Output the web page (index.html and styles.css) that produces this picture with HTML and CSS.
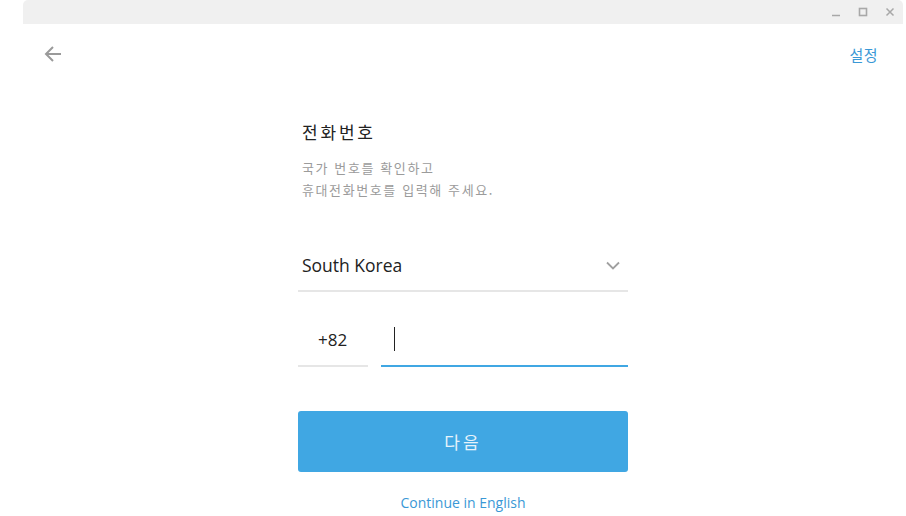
FILE: index.html
```html
<!DOCTYPE html>
<html lang="ko">
<head>
    <meta charset="UTF-8">
    <title>Telegram</title>
    <link rel="stylesheet" href="styles.css">
</head>
<body>

    <div id="window">

        <div id="titlebar">
            <span class="win-btn">
                <svg width="10" height="10" viewBox="0 0 10 10"><path d="M1 8.5h8" stroke="#a8a8a8" stroke-width="1.5"/></svg>
            </span>
            <span class="win-btn">
                <svg width="10" height="10" viewBox="0 0 10 10"><rect x="1.5" y="1.5" width="7" height="7" fill="none" stroke="#a8a8a8" stroke-width="1.6"/></svg>
            </span>
            <span class="win-btn">
                <svg width="10" height="10" viewBox="0 0 10 10"><path d="M1.5 1.5l7 7M8.5 1.5l-7 7" stroke="#a8a8a8" stroke-width="1.5"/></svg>
            </span>
        </div>

        <div id="topbar">
            <span id="back">
                <svg width="20" height="20" viewBox="0 0 20 20"><path d="M18 10H3M10 3L3 10l7 7" fill="none" stroke="#9a9a9a" stroke-width="2"/></svg>
            </span>
            <span id="settings">설정</span>
        </div>

        <div id="intro">
            <div class="title">전화번호</div>
            <div class="desc">국가 번호를 확인하고<br>휴대전화번호를 입력해 주세요.</div>

            <div id="country">
                <span>South Korea</span>
                <svg width="14" height="9" viewBox="0 0 14 9"><path d="M1 1.5l6 6 6-6" fill="none" stroke="#a0a0a0" stroke-width="1.8"/></svg>
            </div>

            <div id="phone-row">
                <div id="code">+82</div>
                <div id="number"><span class="caret"></span></div>
            </div>

            <button id="next">다음</button>

            <div id="english">Continue in English</div>
        </div>

    </div>

</body>
</html>
```

FILE: styles.css
```css
* {
    margin: 0px;
    padding: 0px;
    box-sizing: border-box;
}
html, body {
    width: 100%;
    height: 100%;
    background-color: white;
    font-family: "Open Sans", "Noto Sans CJK KR", sans-serif;
    overflow: hidden;
}
#window {
    width: 880px;
    margin-left: 23px;
}
#titlebar {
    height: 24px;
    background-color: #f0f0f0;
    border-radius: 5px 5px 0 0;
    display: flex;
    justify-content: flex-end;
    align-items: center;
    padding-right: 8px;
    gap: 17px;
}
.win-btn {
    width: 10px;
    height: 10px;
    display: flex;
}
#topbar {
    height: 60px;
    display: flex;
    justify-content: space-between;
    align-items: center;
    padding: 0 25px 0 20px;
}
#back {
    display: flex;
}
#settings {
    color: #3a98d6;
    font-size: 15px;
    letter-spacing: 0.5px;
}
#intro {
    width: 330px;
    margin: 0 auto;
    padding-top: 36px;
}
.title {
    font-family: "Noto Sans CJK KR", sans-serif;
    font-size: 17px;
    color: #222;
    padding-left: 4px;
    letter-spacing: 2.8px;
    line-height: 24px;
}
.desc {
    font-family: "Noto Sans CJK KR", sans-serif;
    font-size: 13px;
    color: #9b9b9b;
    padding-left: 4px;
    line-height: 22px;
    margin-top: 13px;
    letter-spacing: 1.6px;
}
#country {
    margin-top: 43px;
    height: 48px;
    border-bottom: 2px solid #e6e6e6;
    display: flex;
    justify-content: space-between;
    align-items: center;
    padding: 0 8px 4px 4px;
    font-size: 17.5px;
    color: #222;
}
#phone-row {
    margin-top: 23px;
    display: flex;
    justify-content: space-between;
    height: 52px;
}
#code {
    width: 70px;
    border-bottom: 2px solid #e6e6e6;
    font-size: 17px;
    color: #222;
    padding: 0 0 2px 20px;
    display: flex;
    align-items: center;
}
#number {
    width: 247px;
    border-bottom: 2px solid #40a7e3;
    display: flex;
    align-items: center;
    padding: 0 0 2px 13px;
}
.caret {
    width: 1px;
    height: 24px;
    background-color: #222;
}
#next {
    display: block;
    width: 330px;
    height: 61px;
    margin-top: 44px;
    border: none;
    border-radius: 3px;
    background-color: #40a7e3;
    color: #e6f3fb;
    font-family: "Noto Sans CJK KR", sans-serif;
    font-size: 17px;
    letter-spacing: 3px;
}
#english {
    text-align: center;
    color: #3a98d6;
    font-size: 14px;
    margin-top: 21px;
}
```
